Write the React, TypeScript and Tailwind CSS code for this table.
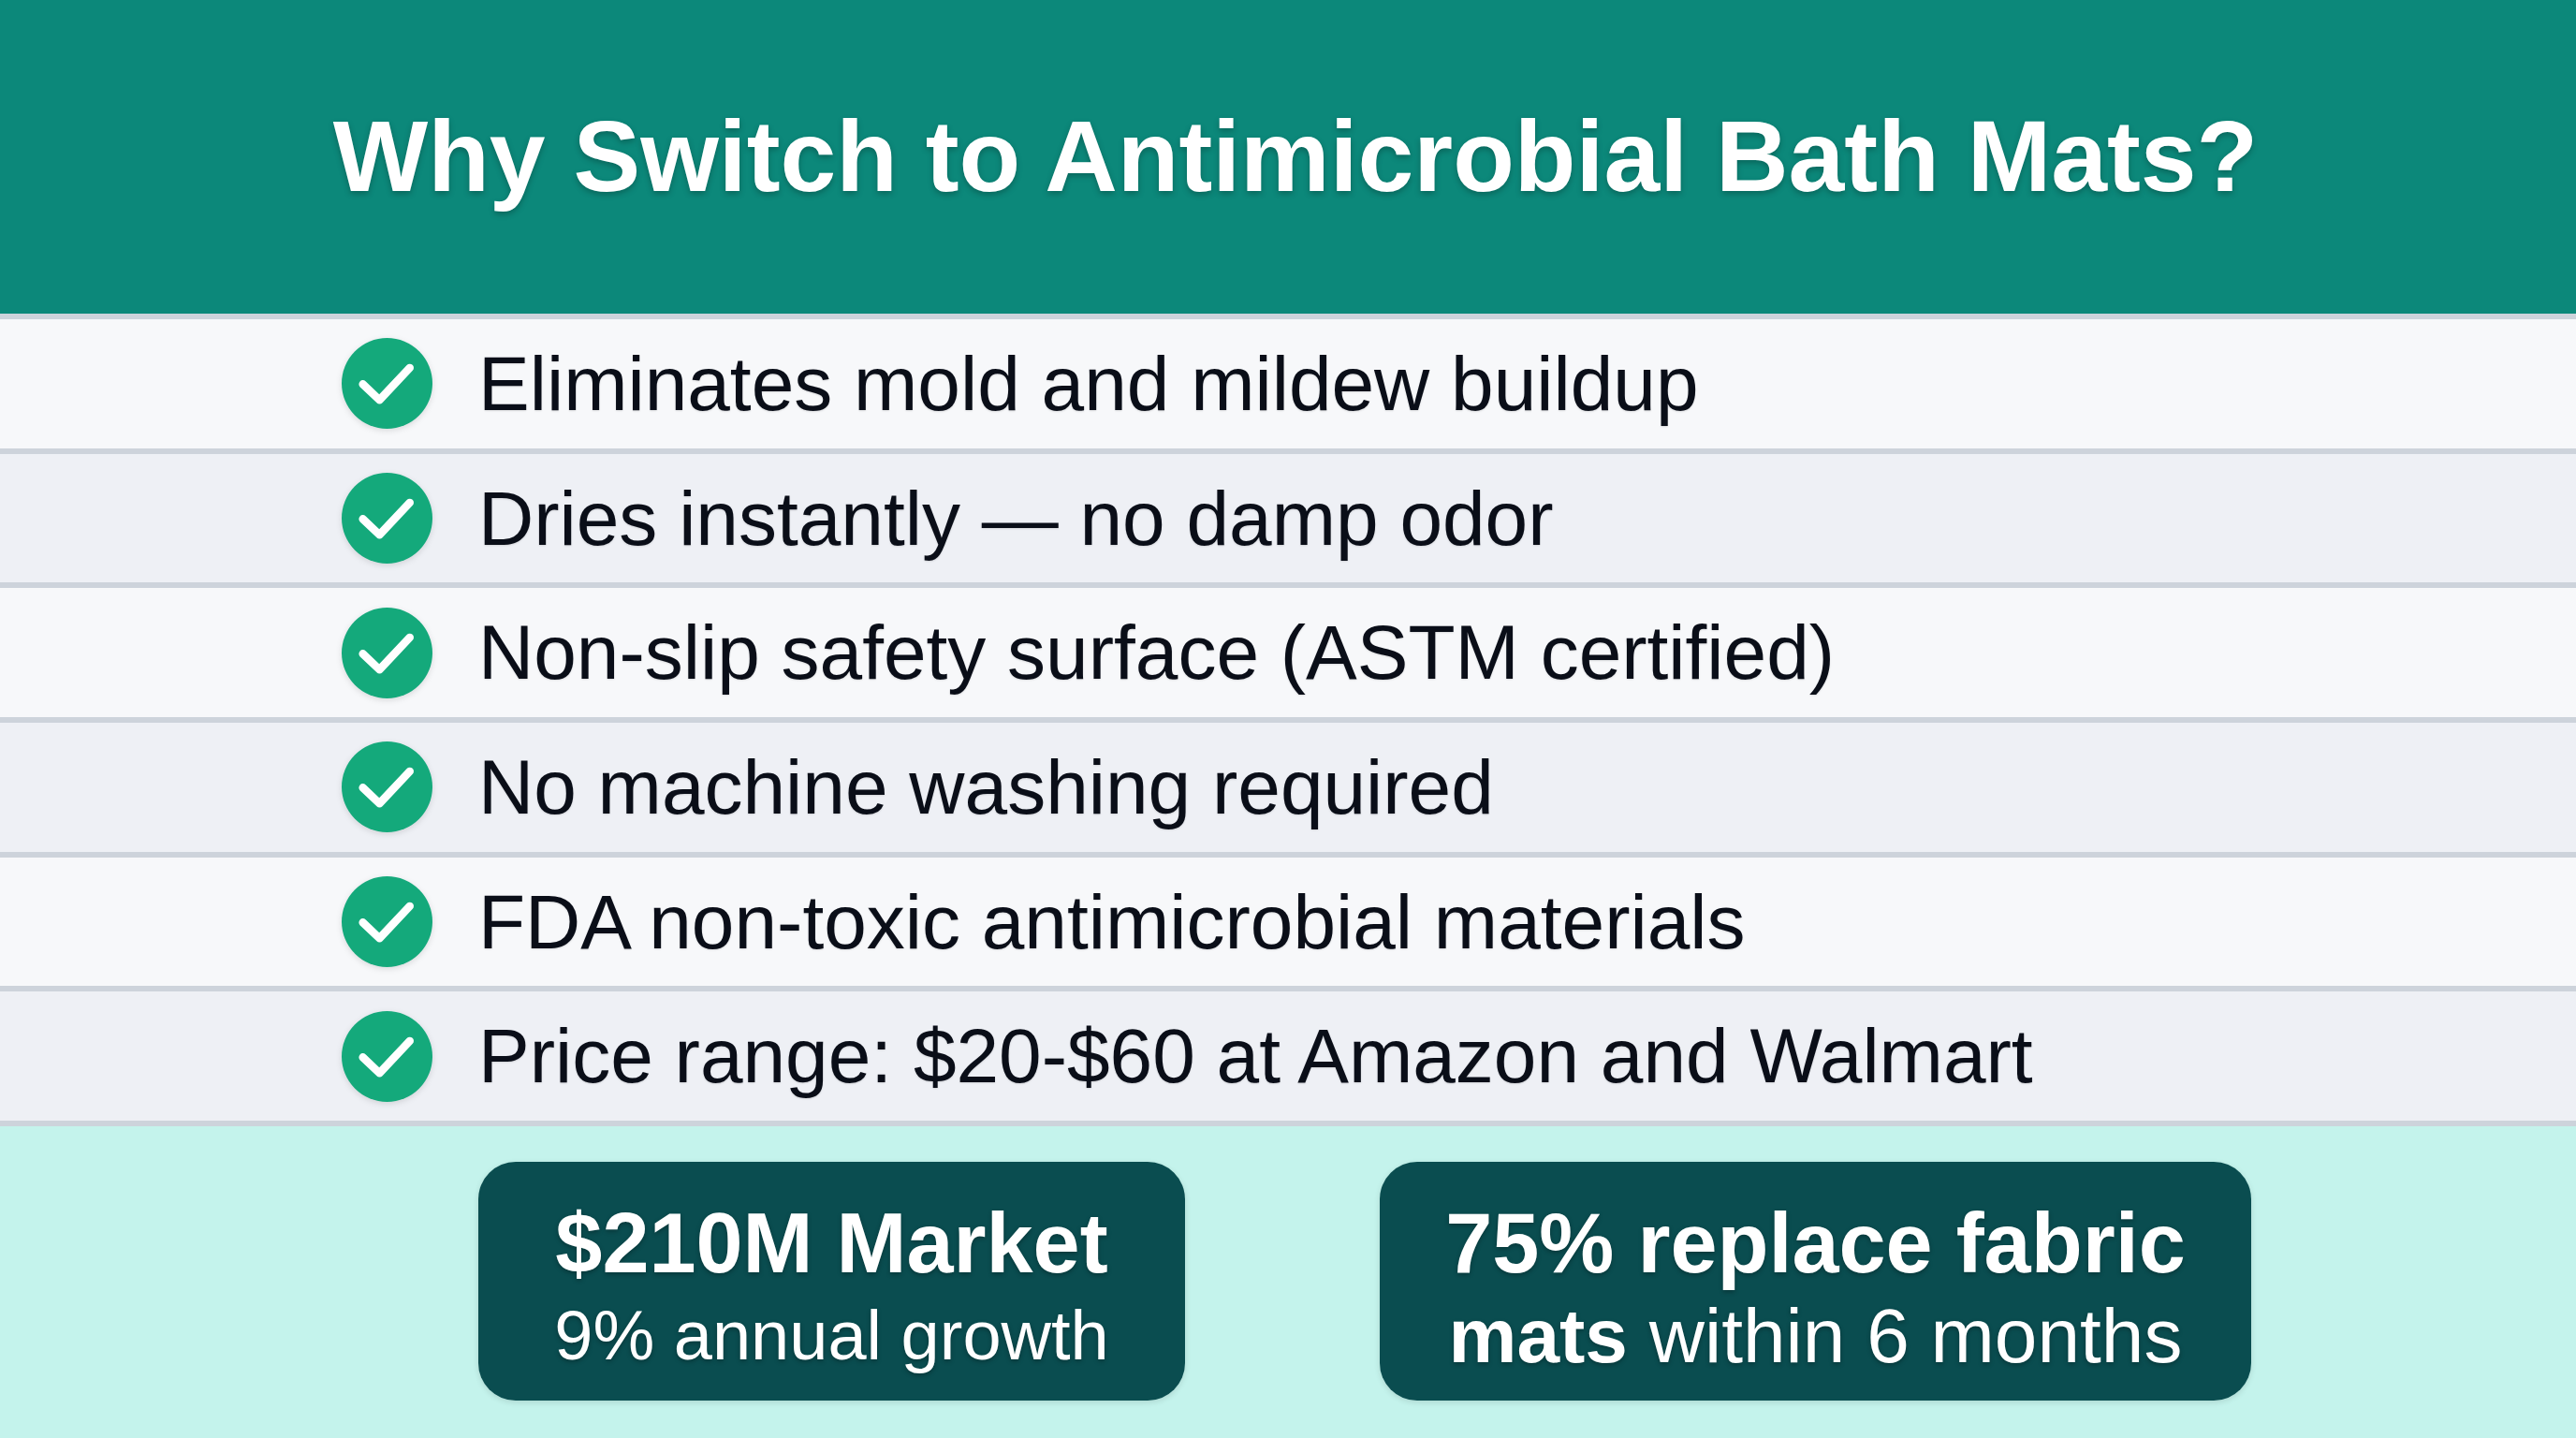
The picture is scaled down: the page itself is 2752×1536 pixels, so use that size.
import React from 'react';

const benefits = [
  'Eliminates mold and mildew buildup',
  'Dries instantly — no damp odor',
  'Non-slip safety surface (ASTM certified)',
  'No machine washing required',
  'FDA non-toxic antimicrobial materials',
  'Price range: $20-$60 at Amazon and Walmart',
];

// green badge with a white tick
function CheckBadge() {
  return (
    <svg viewBox="0 0 24 24" className="w-[97px] h-[97px] shrink-0 drop-shadow-[0_2px_3px_rgba(0,0,0,0.12)]">
      <circle cx="12" cy="12" r="12" fill="#14a97b" />
      <path
        d="M5.6 12.2 L10 16.4 L18 7.9"
        fill="none"
        stroke="#ffffff"
        strokeWidth="2.1"
        strokeLinecap="round"
        strokeLinejoin="round"
      />
    </svg>
  );
}

export default function App() {
  return (
    <div className="w-[2752px] h-[1536px] flex flex-col overflow-hidden [font-family:'Liberation_Sans',Arial,sans-serif]">
      {/* Header */}
      <header className="h-[335px] shrink-0 bg-[#0c887a] flex items-center justify-center pl-[16px]">
        <h1 className="text-[107.5px] leading-none font-bold text-white [text-shadow:0_3px_6px_rgba(0,0,0,0.25)]">
          Why Switch to Antimicrobial Bath Mats?
        </h1>
      </header>

      {/* Benefit rows */}
      <div className="flex flex-col shrink-0 border-t-[6px] border-[#cdd3db]">
        {benefits.map((text, i) => (
          <div
            key={text}
            className={`h-[143.7px] shrink-0 flex items-center gap-[49px] pl-[365px] border-b-[6px] border-[#cdd3db] ${
              i % 2 === 0 ? 'bg-[#f7f8fa]' : 'bg-[#eef0f5]'
            }`}
          >
            <CheckBadge />
            <span className="text-[82px] leading-none text-[#0a0e18] [text-shadow:0_1px_2px_rgba(0,0,0,0.12)]">
              {text}
            </span>
          </div>
        ))}
      </div>

      {/* Stats */}
      <div className="flex-1 bg-[#c4f3ec] flex items-center pl-[511px] gap-[208px] pb-[2px]">
        <div className="w-[755px] h-[255px] pt-[19px] rounded-[40px] bg-[#0a4d50] flex flex-col items-center justify-center text-white [text-shadow:0_2px_5px_rgba(0,0,0,0.3)] shadow-[0_2px_6px_rgba(0,0,0,0.12)]">
          <div className="text-[90px] leading-[92px] font-bold">$210M Market</div>
          <div className="mt-[5px] text-[74px] leading-[96px]">9% annual growth</div>
        </div>
        <div className="w-[931px] h-[255px] pt-[19px] rounded-[40px] bg-[#0a4d50] flex flex-col items-center justify-center text-white [text-shadow:0_2px_5px_rgba(0,0,0,0.3)] shadow-[0_2px_6px_rgba(0,0,0,0.12)]">
          <div className="text-[90px] leading-[92px] font-bold">75% replace fabric</div>
          <div className="mt-[5px] text-[82px] leading-[96px]">
            <span className="font-bold">mats</span> within 6 months
          </div>
        </div>
      </div>
    </div>
  );
}
